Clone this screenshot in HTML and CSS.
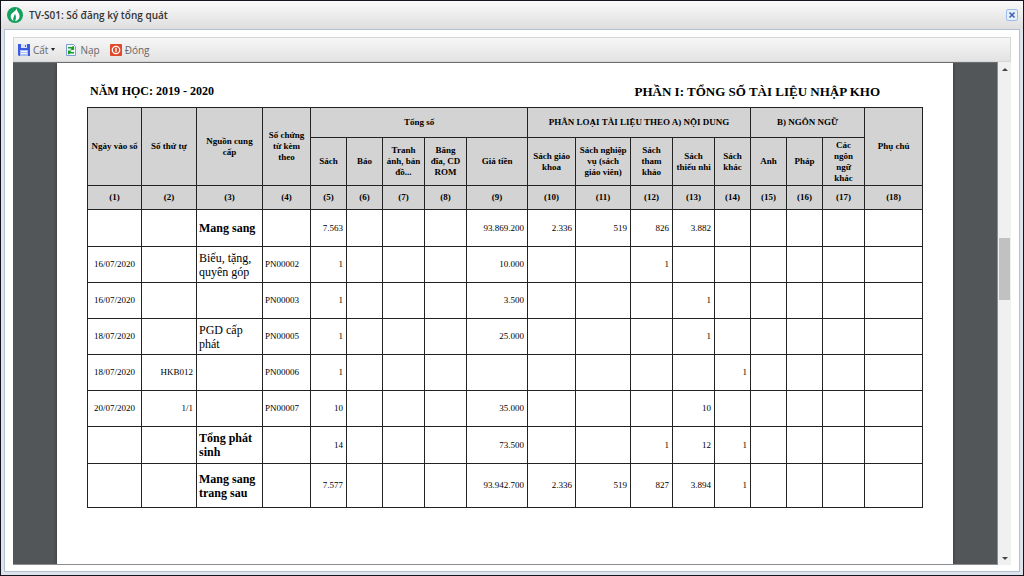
FILE: index.html
```html
<!DOCTYPE html>
<html lang="vi">
<head>
    <meta charset="UTF-8">
    <meta name="viewport" content="width=device-width, initial-scale=1.0">
    <title>TV-S01: Sổ đăng ký tổng quát</title>
    <link rel="stylesheet" href="styles.css">
</head>
<body>
    <div class="window">
        <header class="title-bar">
            <svg class="logo" viewBox="0 0 16 16" aria-hidden="true">
                <circle cx="8" cy="8" r="8" fill="#12a05c"/>
                <path d="M9.500 1.200C9.200 4.500 3.500 5.500 3.700 9.600c.1 2.200 1.400 3.700 3 4.600C5.300 11 7.400 9.500 7.900 6.800c1.200 1.800 1.500 4.400.2 7.400C11 13.600 12.700 11.600 12.600 9 12.500 6 10 4.500 9.500 1.200z" fill="#fff"/>
            </svg>
            <h1>TV-S01: Sổ đăng ký tổng quát</h1>
            <button class="close-btn" type="button" aria-label="Đóng cửa sổ">
                <svg viewBox="0 0 12 12"><path d="M3 3l6 6M9 3L3 9" stroke="#4560b4" stroke-width="2"/></svg>
            </button>
        </header>

        <main class="content">
            <div class="toolbar">
                <button type="button">
                    <svg class="icon" viewBox="0 0 12 12" aria-hidden="true">
                        <path d="M0 0h12v12H1l-1-1z" fill="#3c5be0"/>
                        <path d="M3 0h6v4H3z" fill="#d8e2fb"/>
                        <path d="M7 1h1v2H7z" fill="#3c5be0"/>
                        <path d="M2 6h8v6H2z" fill="#a9bdf5"/>
                        <path d="M3 7h6v1H3zM3 9h6v1H3z" fill="#fff"/>
                    </svg>
                    Cất
                    <span class="caret"></span>
                </button>
                <button type="button">
                    <svg class="icon" viewBox="0 0 12 12" aria-hidden="true">
                        <path d="M1.500.5h7l2 2v9h-9z" fill="#eef4ff" stroke="#7f9fd4"/>
                        <path d="M3 3h4L8 2l1 .5V6H5.500l1-1L6 4.500H3zM9 9.500H5l-1 1-1-.5V6.500h3.500l-1 1 .5.5h3z" fill="#16a01c"/>
                    </svg>
                    Nạp
                </button>
                <button type="button">
                    <svg class="icon" viewBox="0 0 12 12" aria-hidden="true">
                        <rect width="12" height="12" rx="1" fill="#e0492a"/>
                        <circle cx="6" cy="6" r="3.700" fill="none" stroke="#fff" stroke-width="1.300"/>
                        <path d="M6 4v4" stroke="#fff" stroke-width="1.400"/>
                    </svg>
                    Đóng
                </button>
            </div>

            <div class="viewer">
                <div class="canvas">
                    <article class="sheet">
                        <div class="sheet-head">
                            <h2>NĂM HỌC: 2019 - 2020</h2>
                            <h2 class="part">PHẦN I: TỔNG SỐ TÀI LIỆU NHẬP KHO</h2>
                        </div>
                        <table class="register">
                            <colgroup>
                                <col class="w54"><col class="w55"><col class="w66"><col class="w48">
                                <col class="w36"><col class="w36"><col class="w42"><col class="w42"><col class="w61">
                                <col class="w48"><col class="w55"><col class="w42"><col class="w42"><col class="w36">
                                <col class="w36"><col class="w36"><col class="w42"><col class="w58">
                            </colgroup>
                            <thead>
                                <tr class="groups">
                                    <th rowspan="2">Ngày vào sổ</th>
                                    <th rowspan="2">Số thứ tự</th>
                                    <th rowspan="2">Nguồn cung cấp</th>
                                    <th rowspan="2">Số chứng từ kèm theo</th>
                                    <th colspan="5">Tổng số</th>
                                    <th colspan="5">PHÂN LOẠI TÀI LIỆU THEO A) NỘI DUNG</th>
                                    <th colspan="3">B) NGÔN NGỮ</th>
                                    <th rowspan="2">Phụ chú</th>
                                </tr>
                                <tr class="names">
                                    <th>Sách</th>
                                    <th>Báo</th>
                                    <th>Tranh ảnh, bản đồ...</th>
                                    <th>Băng<br>đĩa, CD<br>ROM</th>
                                    <th>Giá tiền</th>
                                    <th>Sách giáo khoa</th>
                                    <th>Sách nghiệp<br>vụ (sách<br>giáo viên)</th>
                                    <th>Sách tham khảo</th>
                                    <th>Sách thiếu nhi</th>
                                    <th>Sách khác</th>
                                    <th>Anh</th>
                                    <th>Pháp</th>
                                    <th>Các<br>ngôn<br>ngữ<br>khác</th>
                                </tr>
                                <tr class="numbers">
                                    <th>(1)</th><th>(2)</th><th>(3)</th><th>(4)</th><th>(5)</th><th>(6)</th>
                                    <th>(7)</th><th>(8)</th><th>(9)</th><th>(10)</th><th>(11)</th><th>(12)</th>
                                    <th>(13)</th><th>(14)</th><th>(15)</th><th>(16)</th><th>(17)</th><th>(18)</th>
                                </tr>
                            </thead>
                            <tbody>
                                <tr class="opening">
                                    <td></td><td></td><td class="source total">Mang sang</td><td></td>
                                    <td>7.563</td><td></td><td></td><td></td><td>93.869.200</td>
                                    <td>2.336</td><td>519</td><td>826</td><td>3.882</td><td></td>
                                    <td></td><td></td><td></td><td></td>
                                </tr>
                                <tr>
                                    <td class="date">16/07/2020</td><td></td><td class="source">Biếu, tặng, quyên góp</td><td class="voucher">PN00002</td>
                                    <td>1</td><td></td><td></td><td></td><td>10.000</td>
                                    <td></td><td></td><td>1</td><td></td><td></td>
                                    <td></td><td></td><td></td><td></td>
                                </tr>
                                <tr>
                                    <td class="date">16/07/2020</td><td></td><td class="source"></td><td class="voucher">PN00003</td>
                                    <td>1</td><td></td><td></td><td></td><td>3.500</td>
                                    <td></td><td></td><td></td><td>1</td><td></td>
                                    <td></td><td></td><td></td><td></td>
                                </tr>
                                <tr>
                                    <td class="date">18/07/2020</td><td></td><td class="source">PGD cấp phát</td><td class="voucher">PN00005</td>
                                    <td>1</td><td></td><td></td><td></td><td>25.000</td>
                                    <td></td><td></td><td></td><td>1</td><td></td>
                                    <td></td><td></td><td></td><td></td>
                                </tr>
                                <tr>
                                    <td class="date">18/07/2020</td><td>HKB012</td><td class="source"></td><td class="voucher">PN00006</td>
                                    <td>1</td><td></td><td></td><td></td><td></td>
                                    <td></td><td></td><td></td><td></td><td>1</td>
                                    <td></td><td></td><td></td><td></td>
                                </tr>
                                <tr>
                                    <td class="date">20/07/2020</td><td>1/1</td><td class="source"></td><td class="voucher">PN00007</td>
                                    <td>10</td><td></td><td></td><td></td><td>35.000</td>
                                    <td></td><td></td><td></td><td>10</td><td></td>
                                    <td></td><td></td><td></td><td></td>
                                </tr>
                                <tr class="sum">
                                    <td></td><td></td><td class="source total">Tổng phát sinh</td><td></td>
                                    <td>14</td><td></td><td></td><td></td><td>73.500</td>
                                    <td></td><td></td><td>1</td><td>12</td><td>1</td>
                                    <td></td><td></td><td></td><td></td>
                                </tr>
                                <tr class="carry">
                                    <td></td><td></td><td class="source total">Mang sang trang sau</td><td></td>
                                    <td>7.577</td><td></td><td></td><td></td><td>93.942.700</td>
                                    <td>2.336</td><td>519</td><td>827</td><td>3.894</td><td>1</td>
                                    <td></td><td></td><td></td><td></td>
                                </tr>
                            </tbody>
                        </table>
                    </article>
                </div>
                <div class="scrollbar">
                    <span class="arrow up"></span>
                    <div class="track"><div class="thumb"></div></div>
                    <span class="arrow down"></span>
                </div>
            </div>
        </main>
    </div>
</body>
</html>
```
FILE: styles.css
```css
* {
    box-sizing: border-box;
}

body {
    margin: 0;
    height: 100vh;
    overflow: hidden;
    background: #14151f;
    font-family: "Open Sans", "Noto Sans", sans-serif;
}

.window {
    display: flex;
    flex-direction: column;
    height: 100vh;
    padding: 0 3px 3px;
    border: 1px solid #14151f;
    background: #dfe4ec;
}

/* title bar */
.title-bar {
    display: flex;
    align-items: center;
    gap: 6px;
    height: 28px;
    margin: 0 -3px;
    padding: 0 5px 0 6px;
    background: linear-gradient(#fafafa, #dedede);
}

.logo {
    width: 16px;
    height: 16px;
}

.title-bar h1 {
    flex: 1;
    margin: 0;
    color: #333;
    font-size: 10px;
    font-weight: 600;
}

.close-btn {
    width: 12px;
    height: 12px;
    padding: 0;
    border: 1px solid #9dbbe8;
    border-radius: 2px;
    background: #e6effc;
    cursor: pointer;
}

.close-btn svg {
    display: block;
    width: 10px;
    height: 10px;
}

.content {
    flex: 1;
    display: flex;
    flex-direction: column;
    min-height: 0;
    padding: 7px 8px 6px;
    border: 1px solid #b3c0cf;
    background: #fff;
}

/* toolbar */
.toolbar {
    display: flex;
    align-items: center;
    gap: 10px;
    height: 25px;
    padding: 0 4px;
    border: 1px solid #d6d6d6;
    background: linear-gradient(#f6f6f6, #e3e3e3);
}

.toolbar button {
    display: flex;
    align-items: center;
    gap: 3px;
    padding: 0;
    border: none;
    background: transparent;
    color: #666;
    font-family: inherit;
    font-size: 10px;
    cursor: pointer;
}

.icon {
    width: 12px;
    height: 12px;
}

.caret {
    border: 2px solid transparent;
    border-top: 3px solid #222;
    border-bottom: none;
}

/* document viewer */
.viewer {
    flex: 1;
    display: flex;
    min-height: 0;
}

.canvas {
    flex: 1;
    padding: 0 44px;
    overflow: hidden;
    border: 1px solid #8b8e90;
    border-top-color: #6b6e70;
    border-width: 1px 1px 1px 0;
    background: #525659;
}

.sheet {
    min-height: 100%;
    padding: 20px 30px;
    background: #fff;
    box-shadow: 0 0 3px #333;
    color: #000;
    font-family: "Liberation Serif", serif;
}

.sheet-head {
    display: flex;
    justify-content: space-between;
    margin-bottom: 7px;
    padding: 0 43px 0 3px;
}

.sheet-head h2 {
    margin: 0;
    font-size: 12px;
    line-height: 17px;
}

.sheet-head .part {
    font-size: 13px;
}

.register {
    width: 100%;
    table-layout: fixed;
    border-collapse: collapse;
    font-size: 9px;
    line-height: 11px;
}

.w36 { width: 36px; }
.w42 { width: 42px; }
.w48 { width: 48px; }
.w54 { width: 54px; }
.w55 { width: 55px; }
.w58 { width: 58px; }
.w61 { width: 61px; }
.w66 { width: 66px; }

.register th,
.register td {
    border: 1px solid #222;
}

.register th {
    padding: 0 2px;
    background: #d3d3d3;
}

.groups {
    height: 30px;
}

.names {
    height: 48px;
}

.numbers {
    height: 24px;
}

.register tbody tr {
    height: 36px;
}

.register tbody .opening,
.register tbody .sum {
    height: 37px;
}

.register tbody .carry {
    height: 44px;
}

.register td {
    padding: 0 3px;
    text-align: right;
}

.register .date {
    text-align: center;
}

.register .voucher {
    padding: 0 2px;
    text-align: left;
}

.register .source {
    padding: 0 2px;
    font-size: 12px;
    line-height: 14px;
    text-align: left;
}

.register .total {
    font-weight: bold;
}

/* scrollbar */
.scrollbar {
    display: flex;
    flex-direction: column;
    align-items: center;
    width: 13px;
    padding: 6px 0 5px;
    background: #f0f0f0;
}

.track {
    flex: 1;
    display: flex;
    flex-direction: column;
    width: 11px;
}

/* page position inside the track */
.track::before {
    content: "";
    flex: 167;
}

.track::after {
    content: "";
    flex: 256;
}

.thumb {
    flex: 62;
    background: #c1c1c1;
}

.arrow {
    border: 3px solid transparent;
}

.up {
    border-top: none;
    border-bottom-color: #444;
}

.down {
    border-bottom: none;
    border-top-color: #444;
}
```
